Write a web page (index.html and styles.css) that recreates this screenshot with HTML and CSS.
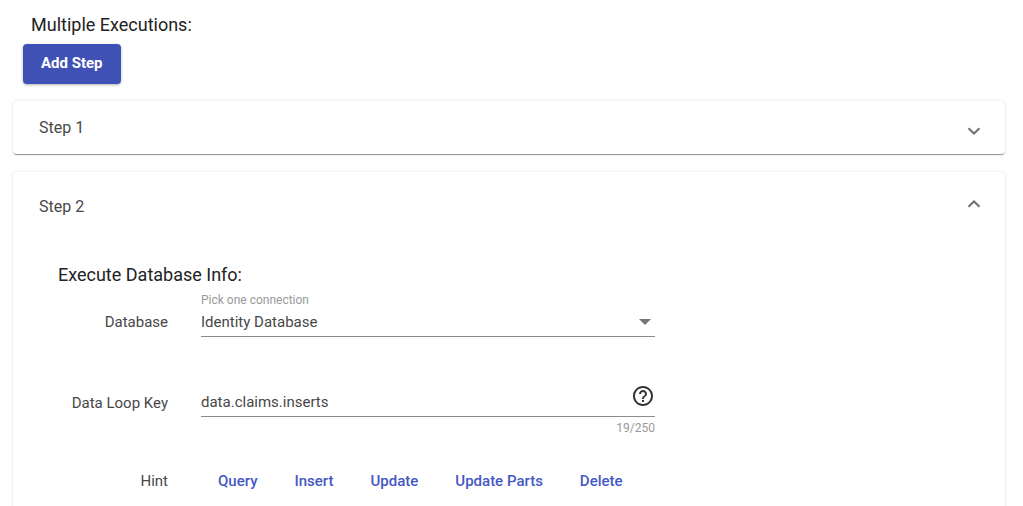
FILE: index.html
```html
<!DOCTYPE html>
<html lang="en">
<head>
<meta charset="utf-8">
<title>Multiple Executions</title>
<link rel="stylesheet" href="styles.css">
</head>
<body>
<main class="page">
  <h1 class="title">Multiple Executions:</h1>
  <button class="add" type="button">Add Step</button>

  <section class="panel">
    <button class="panel-header" type="button" aria-expanded="false">
      <span>Step 1</span>
      <svg class="chevron chevron-down" viewBox="0 0 14 8" aria-hidden="true"><path d="M1.5 1.2 7 6.5l5.500-5.300"/></svg>
    </button>
  </section>

  <section class="panel">
    <button class="panel-header panel-header-open" type="button" aria-expanded="true">
      <span>Step 2</span>
      <svg class="chevron chevron-up" viewBox="0 0 14 8" aria-hidden="true"><path d="M1.500 6.800 7 1.500l5.500 5.300"/></svg>
    </button>
    <form class="panel-body">
      <h2 class="subtitle">Execute Database Info:</h2>
      <div class="row">
        <label class="label" for="database">Database</label>
        <div class="field">
          <span class="caption">Pick one connection</span>
          <div class="control">
            <select class="value" id="database"><option>Identity Database</option></select>
            <svg class="arrow" viewBox="0 0 12 6" aria-hidden="true"><path d="M0 0h12L6 6z"/></svg>
          </div>
        </div>
      </div>
      <div class="row row-key">
        <label class="label" for="loop-key">Data Loop Key</label>
        <div class="field">
          <div class="control">
            <input class="value" id="loop-key" type="text" maxlength="250" value="data.claims.inserts">
            <button class="help" type="button" aria-label="Help">
              <svg viewBox="0 0 24 24" aria-hidden="true"><path d="M11 18h2v-2h-2v2zm1-16C6.480 2 2 6.480 2 12s4.480 10 10 10 10-4.480 10-10S17.520 2 12 2zm0 18c-4.410 0-8-3.590-8-8s3.590-8 8-8 8 3.590 8 8-3.590 8-8 8zm0-14c-2.210 0-4 1.790-4 4h2c0-1.100.9-2 2-2s2 .9 2 2c0 2-3 1.750-3 5h2c0-2.250 3-2.500 3-5 0-2.210-1.790-4-4-4z"/></svg>
            </button>
          </div>
          <span class="counter">19/250</span>
        </div>
      </div>
      <div class="row row-hint">
        <span class="label">Hint</span>
        <div class="hints">
          <button class="hint" type="button">Query</button>
          <button class="hint" type="button">Insert</button>
          <button class="hint" type="button">Update</button>
          <button class="hint" type="button">Update Parts</button>
          <button class="hint" type="button">Delete</button>
        </div>
      </div>
    </form>
  </section>
</main>
</body>
</html>
```
FILE: styles.css
```css
* {
  box-sizing: border-box;
}

body {
  margin: 0;
  background: #fff;
  color: #484848;
  font: 400 15px/20px Roboto, sans-serif;
}

button,
input,
select {
  font: inherit;
  color: inherit;
}

button {
  border: 0;
  padding: 0;
  background: none;
  cursor: pointer;
}

.page {
  height: 100vh;
  overflow: hidden;
  padding: 14px 18px 0 13px;
}

.title,
.subtitle {
  margin: 0;
  color: #222;
  font-size: 18px;
  font-weight: 400;
  line-height: 22px;
}

.title {
  padding-left: 18px;
}

.add {
  display: block;
  height: 40px;
  margin: 8px 10px 17px;
  padding: 0 18px 2px;
  border-radius: 4px;
  background: #3f51b5;
  box-shadow: 0 1px 3px rgba(0, 0, 0, 0.3);
  color: #fff;
  font-weight: 700;
}

.panel {
  margin-bottom: 18px;
  border-radius: 4px;
  background: #fff;
  box-shadow: 0 2px 1px -1px rgba(0, 0, 0, 0.3), 0 1px 1px rgba(0, 0, 0, 0.16), 0 0 3px rgba(0, 0, 0, 0.12);
}

.panel-header {
  display: flex;
  align-items: center;
  justify-content: space-between;
  width: 100%;
  height: 53px;
  padding: 0 24px 0 26px;
  font-size: 16px;
}

.panel-header-open {
  height: 69px;
}

.chevron {
  width: 14px;
  height: 8px;
  fill: none;
  stroke: #707070;
  stroke-width: 2;
}

.chevron-down {
  margin-top: 6px;
}

.chevron-up {
  margin-bottom: 6px;
}

.panel-body {
  padding: 23px 26px 24px 45px;
}

.row {
  display: grid;
  grid-template-columns: 110px minmax(0, 454px);
  column-gap: 33px;
}

.label {
  text-align: right;
}

.row .label {
  padding-top: 26px;
}

.field {
  display: flex;
  flex-direction: column;
  padding-top: 6px;
}

.caption,
.counter {
  color: #999;
  font-size: 12px;
  line-height: 16px;
}

.control {
  display: flex;
  align-items: center;
  height: 29px;
  border-bottom: 1px solid #8c8c8c;
}

.value {
  flex: 1;
  min-width: 0;
  height: 28px;
  padding: 0;
  border: 0;
  outline: 0;
  background: none;
  appearance: none;
}

.arrow {
  width: 12px;
  height: 6px;
  margin-right: 4px;
  fill: #757575;
}

.row-key {
  margin-top: 27px;
}

.row-key .label {
  padding-top: 29px;
}

.row-key .field {
  padding-top: 24px;
}

.help {
  display: flex;
  margin: 0 0 13px;
}

.help svg {
  width: 24px;
  height: 24px;
  fill: #333;
}

.counter {
  align-self: flex-end;
  margin-top: 3px;
}

.row-hint {
  margin-top: 35px;
}

.row-hint .label {
  padding-top: 0;
}

.hints {
  display: flex;
  gap: 37px;
  padding-left: 17px;
}

.hint {
  color: #4558c3;
  font-weight: 500;
  white-space: nowrap;
}
```
